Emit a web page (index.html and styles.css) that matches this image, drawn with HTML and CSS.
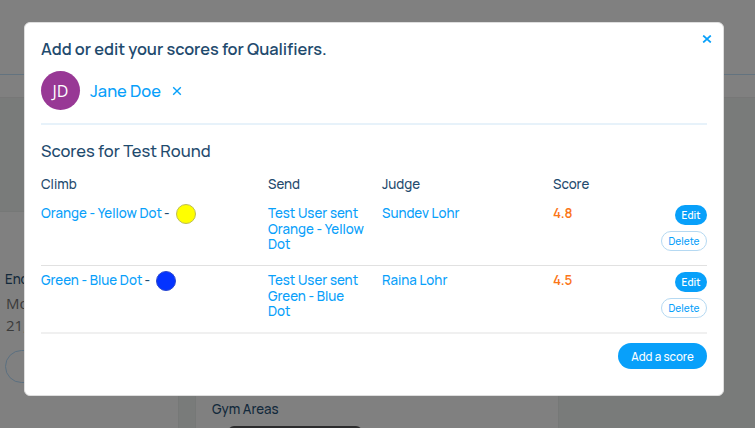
FILE: index.html
```
<!DOCTYPE html>
<html lang="en">
<head>
<meta charset="utf-8">
<title>Scores</title>
<link rel="stylesheet" href="styles.css">
</head>
<body>
<div class="page">
  <div class="topbar"></div>
  <div class="subbar"></div>
  <div class="columns">
    <section class="card details">
      <h3>End</h3>
      <p>Mo<br>21,</p>
      <div class="outline"></div>
    </section>
    <section class="card areas">
      <h3>Gym Areas</h3>
      <div class="photo"></div>
    </section>
  </div>
</div>
<main class="modal">
  <button class="close" aria-label="Close"><svg width="10" height="8" viewBox="0 0 10 8"><path d="M1.2.5 8.8 7.5M8.8.5 1.2 7.5"/></svg></button>
  <h1>Add or edit your scores for Qualifiers.</h1>
  <div class="person">
    <span class="avatar">JD</span>
    <a class="name">Jane Doe</a>
    <svg class="remove" width="10" height="10" viewBox="0 0 10 10"><path d="M1.2 1.2 8.8 8.8M8.8 1.2 1.2 8.8"/></svg>
  </div>
  <h2>Scores for Test Round</h2>
  <div class="row head"><span>Climb</span><span>Send</span><span>Judge</span><span>Score</span></div>
  <div class="row">
    <div class="climb"><a>Orange - Yellow Dot</a><span class="dash">-</span><i class="dot yellow"></i></div>
    <a>Test User sent<br>Orange - Yellow<br>Dot</a>
    <a>Sundev Lohr</a>
    <span class="score">4.8</span>
    <div class="actions"><button class="pill edit">Edit</button><button class="pill delete">Delete</button></div>
  </div>
  <div class="row last">
    <div class="climb"><a>Green - Blue Dot</a><span class="dash">-</span><i class="dot blue"></i></div>
    <a>Test User sent<br>Green - Blue<br>Dot</a>
    <a>Raina Lohr</a>
    <span class="score">4.5</span>
    <div class="actions"><button class="pill edit">Edit</button><button class="pill delete">Delete</button></div>
  </div>
  <button class="add">Add a score</button>
</main>
</body>
</html>
```
FILE: styles.css
```
* { box-sizing: border-box; }
body { margin: 0; font-family: Manrope, Inter, sans-serif; color: #1f4b6e; }
h1, h2, h3, p { margin: 0; font-weight: 500; }
button { font-family: inherit; border: 0; padding: 0; }
.page { width: 755px; height: 428px; overflow: hidden; background: #797b7a; }
.topbar { height: 75px; background: #808080; border-bottom: 1px solid #63737f; }
.subbar { height: 23px; background: #808080; border-bottom: 1px solid #777; }
.columns { display: flex; gap: 18px; height: 330px; }
.card { background: #808080; box-shadow: 0 0 0 1px #767877; }
.details { width: 178px; margin-top: 114px; padding: 59px 0 0 5px; }
.details h3, .areas h3 { font-size: 13.3px; line-height: 17px; font-weight: 500; color: #12293b; }
.details p { margin: 4px 0 0 1px; font: 15px/22px "Open Sans", sans-serif; color: #3b3b3b; }
.outline { width: 160px; height: 33px; margin-top: 14px; border: 1px solid #5b7080; border-radius: 17px; }
.areas { width: 362px; padding: 303px 0 0 16px; }
.photo { width: 134px; height: 12px; margin: 8px 0 0 16px; background: #2c2c2d; border-radius: 8px; }
.modal { position: absolute; left: 24px; top: 22px; width: 700px; height: 374px; padding: 16px 16px 0 16px; background: #fff; border: 1px solid #dedede; border-radius: 6px; }
.close { position: absolute; right: 11px; top: 12px; width: 10px; height: 8px; background: none; }
.close svg { display: block; }
.close path { fill: none; stroke: #08a0fa; stroke-width: 1.7; }
h1 { font-size: 16.4px; line-height: 21px; height: 21px; font-weight: 600; letter-spacing: -0.05px; }
.person { display: flex; align-items: center; height: 65px; padding-bottom: 2px; border-bottom: 2px solid #e7f2fa; }
.avatar { width: 39px; height: 39px; border-radius: 50%; background: #983895; color: #fff; font: 16px/40px "Open Sans", sans-serif; text-align: center; }
.name { font-size: 16.5px; line-height: 20px; font-weight: 500; margin-left: 10px; padding-top: 1px; }
.remove { margin-left: 11px; }
.remove path { fill: none; stroke: #08a0fa; stroke-width: 1.4; }
a { color: #08a0fa; }
h2 { font-size: 16.5px; line-height: 20px; margin-top: 16px; }
.row { display: grid; grid-template-columns: 227px 114px 171px 52px 1fr; height: 67px; padding-top: 7px; font-size: 13.3px; line-height: 15.5px; font-weight: 500; border-bottom: 1px solid #e1e1e1; }
.head { height: 38px; padding-top: 16px; border: 0; }
.last { height: 68px; border-bottom: 2px solid #f0f0f0; }
.climb { display: flex; height: 16px; align-items: center; white-space: nowrap; }
.dash { margin-left: 2px; }
.dot { width: 20px; height: 20px; margin-left: 6px; border-radius: 50%; }
.yellow { background: #ff0; border: 1px solid #bdbd55; }
.blue { background: #0433ff; border: 1px solid #2a48cf; }
.score { color: #fb7618; font-weight: 600; }
.actions { display: flex; flex-direction: column; align-items: flex-end; gap: 6px; margin-top: -1px; }
.pill { height: 20px; border-radius: 10px; font-size: 10px; line-height: 18px; font-weight: 500; }
.edit { width: 32px; background: #08a0fa; color: #fff; font-weight: 600; }
.delete { width: 46px; background: #fff; color: #08a0fa; border: 1px solid #b5d9f2; }
.add { display: block; width: 89px; height: 26px; margin: 9px 0 0 auto; border-radius: 13px; background: #08a0fa; color: #fff; font-size: 11.5px; font-weight: 500; }
```
